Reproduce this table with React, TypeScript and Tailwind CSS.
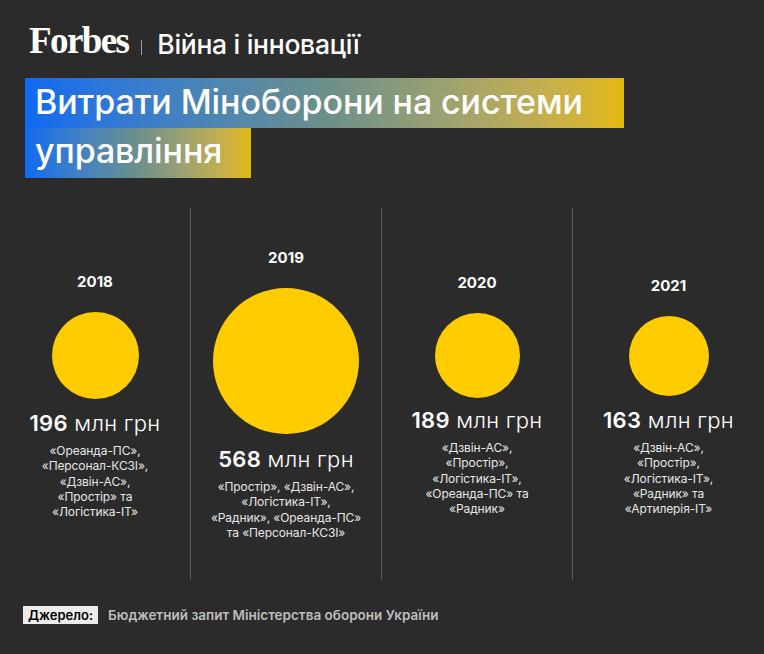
const years = [
  {
    year: '2018',
    top: 'pt-[65px]',
    size: 'w-[87px] h-[87px]',
    gap: 'mt-[11px]',
    amount: '196',
    lines: ['«Ореанда-ПС»,', '«Персонал-КСЗІ»,', '«Дзвін-АС»,', '«Простір» та', '«Логістика-ІТ»'],
  },
  {
    year: '2019',
    top: 'pt-[41px]',
    size: 'w-[146px] h-[146px]',
    gap: 'mt-[12px]',
    amount: '568',
    lines: ['«Простір», «Дзвін-АС»,', '«Логістика-ІТ»,', '«Радник», «Ореанда-ПС»', 'та «Персонал-КСЗІ»'],
  },
  {
    year: '2020',
    top: 'pt-[66px]',
    size: 'w-[85px] h-[85px]',
    gap: 'mt-[9px]',
    amount: '189',
    lines: ['«Дзвін-АС»,', '«Простір»,', '«Логістика-ІТ»,', '«Ореанда-ПС» та', '«Радник»'],
  },
  {
    year: '2021',
    top: 'pt-[69px]',
    size: 'w-[80px] h-[80px]',
    gap: 'mt-[11px]',
    amount: '163',
    lines: ['«Дзвін-АС»,', '«Простір»,', '«Логістика-ІТ»,', '«Радник» та', '«Артилерія-ІТ»'],
  },
];

const sans = "font-['Inter','Noto_Sans',sans-serif]";

const App = () => {
  return (
    <div className={`w-[764px] h-[654px] bg-[#2b2b2b] text-white overflow-hidden ${sans}`}>
      {/* header */}
      <div className="flex items-end pl-[29px] pt-[23px] h-[59px]">
        <span className="font-['Liberation_Serif',serif] font-bold text-[37px] leading-none tracking-[-1.6px] text-white">
          Forbes
        </span>
        <span className="ml-[13px] mb-[4px] w-px h-[15px] bg-[#9a9a9a]" />
        <span className="ml-[15px] text-[26.5px] font-medium leading-none mb-[2px] tracking-[-0.3px]">
          Війна і інновації
        </span>
      </div>

      {/* title */}
      <div className="mt-[19px] ml-[25px] flex flex-col items-start">
        <div className="h-[50px] w-[599px] bg-gradient-to-r from-[#1169f2] via-[#6b8f8a] to-[#e4b900] pl-[10px] flex items-center">
          <span className="text-[34px] font-medium leading-none tracking-[-0.1px] mt-[-2px]">
            Витрати Міноборони на системи
          </span>
        </div>
        <div className="h-[50px] w-[226px] bg-gradient-to-r from-[#1169f2] via-[#6b8f8a] to-[#e4b900] pl-[10px] flex items-center">
          <span className="text-[34px] font-medium leading-none tracking-[-0.1px] mt-[-4px]">управління</span>
        </div>
      </div>

      {/* columns */}
      <div className="mt-[30px] grid grid-cols-4 h-[372px]">
        {years.map((y, i) => (
          <div
            key={y.year}
            className={`flex flex-col items-center ${y.top} ${i < 3 ? 'border-r border-[#5a5a5a]' : ''}`}
          >
            <div className="text-[15px] font-bold leading-[18px]">{y.year}</div>
            <div className={`mt-[21px] rounded-full bg-[#ffcc00] ${y.size}`} />
            <div className={`${y.gap} text-[22px] leading-[26px] whitespace-nowrap tracking-[0.3px]`}>
              <span className="font-semibold">{y.amount}</span>{' '}
              <span className="font-light">млн грн</span>
            </div>
            <div className="mt-[7px] text-[12px] leading-[15.3px] text-[#e6e6e6] text-center whitespace-nowrap tracking-[-0.1px]">
              {y.lines.map((l) => (
                <div key={l}>{l}</div>
              ))}
            </div>
          </div>
        ))}
      </div>

      {/* footer */}
      <div className="mt-[26px] ml-[23px] flex items-center">
        <span className="bg-[#ececec] text-black text-[13px] font-semibold leading-[18px] px-[5px] h-[18px]">
          Джерело:
        </span>
        <span className="ml-[10px] text-[13.5px] font-semibold text-[#bdbdbd] leading-[18px]">
          Бюджетний запит Міністерства оборони України
        </span>
      </div>
    </div>
  );
};

export default App;
